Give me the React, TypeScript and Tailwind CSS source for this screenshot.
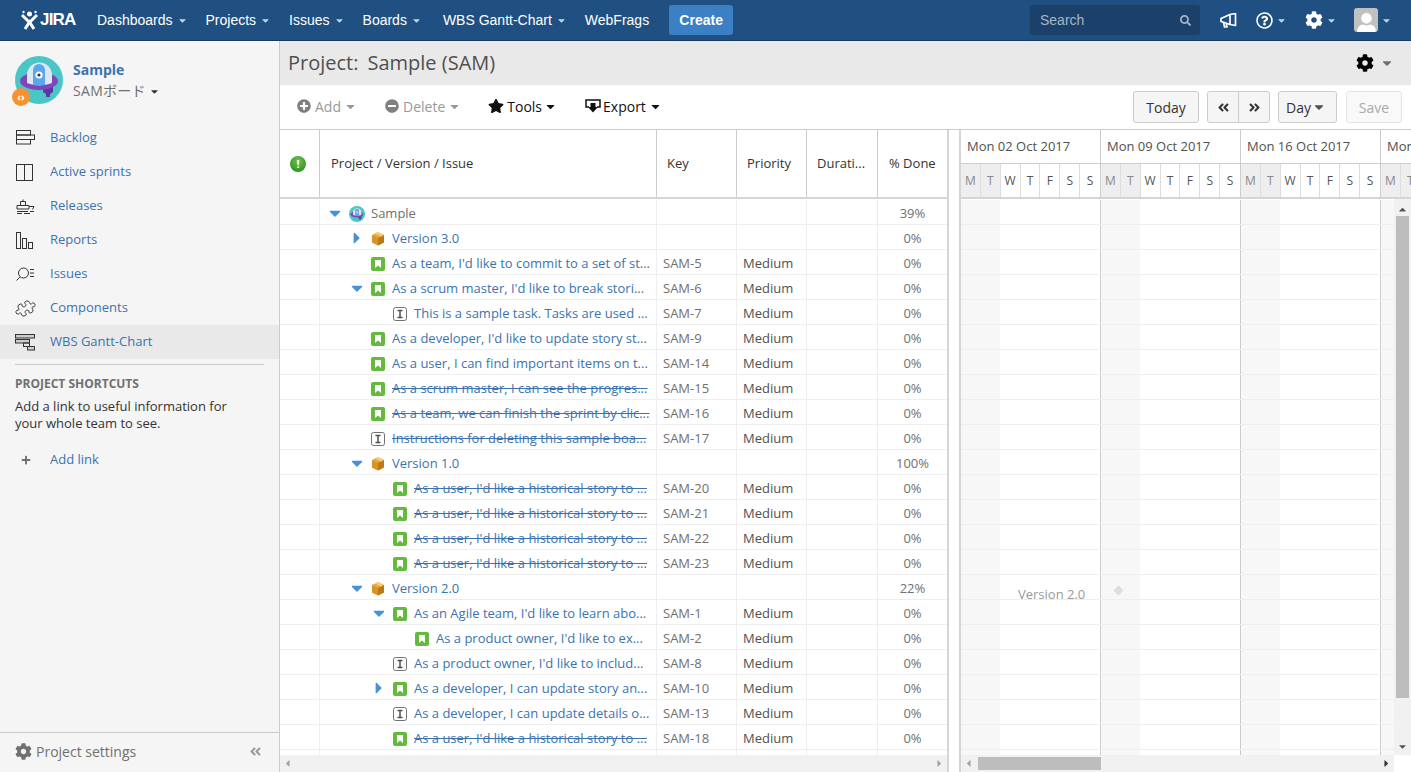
import { FaCog, FaPlus, FaPlusCircle, FaMinusCircle, FaStar, FaSearch, FaRegQuestionCircle, FaUser, FaAngleDoubleLeft, FaAngleDoubleRight, FaCaretDown, FaCaretRight, FaCaretLeft, FaCaretUp } from "react-icons/fa";
import { Puzzle } from "lucide-react";

const navItems = [
  { label: "Dashboards", caret: true, pr: "pr-[18px]" },
  { label: "Projects", caret: true, pr: "pr-[18px]" },
  { label: "Issues", caret: true, pr: "pr-[18px]" },
  { label: "Boards", caret: true, pr: "pr-[21px]" },
  { label: "WBS Gantt-Chart", caret: true, pr: "pr-[18px]" },
  { label: "WebFrags", caret: false, pr: "pr-[20px]" },
];

type Row = {
  level: number;
  type: "project" | "version" | "story" | "task" | "blank";
  title: string;
  key?: string;
  done: string;
  toggle?: "open" | "closed";
  strike?: boolean;
};

const rows: Row[] = [
  { level: 0, type: "project", title: "Sample", done: "39%", toggle: "open" },
  { level: 1, type: "version", title: "Version 3.0", done: "0%", toggle: "closed" },
  { level: 1, type: "story", title: "As a team, I'd like to commit to a set of st...", key: "SAM-5", done: "0%" },
  { level: 1, type: "story", title: "As a scrum master, I'd like to break stori...", key: "SAM-6", done: "0%", toggle: "open" },
  { level: 2, type: "task", title: "This is a sample task. Tasks are used ...", key: "SAM-7", done: "0%" },
  { level: 1, type: "story", title: "As a developer, I'd like to update story st...", key: "SAM-9", done: "0%" },
  { level: 1, type: "story", title: "As a user, I can find important items on t...", key: "SAM-14", done: "0%" },
  { level: 1, type: "story", title: "As a scrum master, I can see the progres...", key: "SAM-15", done: "0%", strike: true },
  { level: 1, type: "story", title: "As a team, we can finish the sprint by clic...", key: "SAM-16", done: "0%", strike: true },
  { level: 1, type: "task", title: "Instructions for deleting this sample boa...", key: "SAM-17", done: "0%", strike: true },
  { level: 1, type: "version", title: "Version 1.0", done: "100%", toggle: "open" },
  { level: 2, type: "story", title: "As a user, I'd like a historical story to ...", key: "SAM-20", done: "0%", strike: true },
  { level: 2, type: "story", title: "As a user, I'd like a historical story to ...", key: "SAM-21", done: "0%", strike: true },
  { level: 2, type: "story", title: "As a user, I'd like a historical story to ...", key: "SAM-22", done: "0%", strike: true },
  { level: 2, type: "story", title: "As a user, I'd like a historical story to ...", key: "SAM-23", done: "0%", strike: true },
  { level: 1, type: "version", title: "Version 2.0", done: "22%", toggle: "open" },
  { level: 2, type: "story", title: "As an Agile team, I'd like to learn abo...", key: "SAM-1", done: "0%", toggle: "open" },
  { level: 3, type: "story", title: "As a product owner, I'd like to ex...", key: "SAM-2", done: "0%" },
  { level: 2, type: "task", title: "As a product owner, I'd like to includ...", key: "SAM-8", done: "0%" },
  { level: 2, type: "story", title: "As a developer, I can update story an...", key: "SAM-10", done: "0%", toggle: "closed" },
  { level: 2, type: "task", title: "As a developer, I can update details o...", key: "SAM-13", done: "0%" },
  { level: 2, type: "story", title: "As a user, I'd like a historical story to ...", key: "SAM-18", done: "0%", strike: true },
  { level: 0, type: "blank", title: "", done: "" },
];

const weeks = ["Mon 02 Oct 2017", "Mon 09 Oct 2017", "Mon 16 Oct 2017", "Mon 23 Oct 2017"];
const days = ["M", "T", "W", "T", "F", "S", "S"];

function SideIcon({ name }: { name: string }) {
  const p = { fill: "none", stroke: "#333", strokeWidth: 1 };
  if (name === "components") {
    return <Puzzle size={19} strokeWidth={1.1} className="shrink-0 rotate-[20deg] text-[#333]" />;
  }
  return (
    <svg width="20" height="20" viewBox="0 0 20 20" className="shrink-0">
      {name === "backlog" && (
        <g {...p}>
          <rect x="1.500" y="2.500" width="14" height="4.500" />
          <rect x="1.500" y="7" width="18" height="4.500" />
          <rect x="1.500" y="11.500" width="14" height="4.500" />
        </g>
      )}
      {name === "sprints" && (
        <g {...p}>
          <rect x="1.500" y="2.500" width="16" height="16" />
          <path d="M9.500 2.500v16" />
        </g>
      )}
      {name === "releases" && (
        <g {...p}>
          <path d="M5.500 9.500v-4h5v4M8 5.500v-2M2 9.500h12v3.500H2zM14 10.500h5l-1.500 3M2 15.500h11M15 15.500h4M2 17.500h5M9 17.500h6" />
        </g>
      )}
      {name === "reports" && (
        <g {...p}>
          <rect x="1.500" y="2.500" width="4" height="16" />
          <rect x="7.500" y="8.500" width="4" height="10" />
          <rect x="13.500" y="12.500" width="4" height="6" />
        </g>
      )}
      {name === "issues" && (
        <g {...p}>
          <circle cx="8.500" cy="9" r="5" />
          <path d="M5 13L1.500 16.500M15 5.500h4M15 9h4M15 12.500h4" />
        </g>
      )}
      {name === "gantt" && (
        <g {...p}>
          <rect x="0.500" y="2.500" width="19" height="3.500" fill="#ccc" />
          <rect x="0.500" y="7.500" width="14" height="3.500" fill="#ccc" />
          <rect x="8.500" y="11" width="6" height="3.500" />
          <rect x="12.500" y="14.500" width="7" height="3.500" fill="#ccc" />
        </g>
      )}
    </svg>
  );
}

function ProjectAvatar({ size }: { size: number }) {
  return (
    <svg width={size} height={size} viewBox="0 0 48 48" className="shrink-0">
      <circle cx="24" cy="24" r="24" fill="#4bc6c6" />
      <path d="M28 30h10v6l-3 2v3h-4v-3l-3-2z" fill="#5e35a5" />
      <ellipse cx="24" cy="25" rx="19" ry="9" fill="#7e46bb" />
      <path d="M12 27V19a12.500 12.500 0 0 1 25 0v8c-8 3-17 3-25 0z" fill="#dfe6f2" />
      <path d="M18 29V14a6 6 0 0 1 12 0v15c-4 1-8 1-12 0z" fill="#5aa7ec" />
      <circle cx="24" cy="19" r="3.600" fill="#fff" />
      <circle cx="24" cy="19" r="1.600" fill="#253858" />
    </svg>
  );
}

function BoxIcon() {
  return (
    <svg width="14" height="15" viewBox="0 0 14 15" className="shrink-0">
      <path d="M7 1l6 3v7.500l-6 3-6-3V4z" fill="#e8a93a" />
      <path d="M7 7l6-3v7.500l-6 3z" fill="#b97a19" />
      <path d="M1 4l6 3v7.500l-6-3z" fill="#d79528" />
      <path d="M4 2.500l6 3 2-1-2-2-3-1.500z" fill="#f4cf7d" />
    </svg>
  );
}

function StoryIcon() {
  return (
    <span className="flex h-[14px] w-[14px] shrink-0 items-center justify-center rounded-[2px] bg-[#63ba3c]">
      <svg width="6" height="8" viewBox="0 0 6 8">
        <path d="M0 0h6v8L3 5.500 0 8z" fill="#fff" />
      </svg>
    </span>
  );
}

function TaskIcon() {
  return (
    <svg width="14" height="14" viewBox="0 0 14 14" className="shrink-0">
      <rect x="0.500" y="0.500" width="13" height="13" rx="2" fill="#fff" stroke="#707070" />
      <path d="M4.500 3.500h5M4.500 10.500h5M7 3.500v7" stroke="#505050" strokeWidth="1.500" fill="none" />
    </svg>
  );
}

function ExportIcon() {
  return (
    <svg width="16" height="14" viewBox="0 0 16 14" className="shrink-0">
      <path d="M4 8H1V1h14v7h-3" fill="none" stroke="#111" strokeWidth="1.500" />
      <path d="M5.500 4h5v4h2.500L8 13.500 3 8h2.500z" fill="#111" />
    </svg>
  );
}

function Toggle({ dir }: { dir: "open" | "closed" }) {
  return dir === "open" ? (
    <FaCaretDown className="shrink-0 text-[#4a90d9]" size={18} />
  ) : (
    <FaCaretRight className="shrink-0 text-[#4a90d9]" size={18} />
  );
}

function TreeRow({ row }: { row: Row }) {
  const pad = row.level * 22 + 29;
  return (
    <div className="flex h-[25px] shrink-0 border-b border-[#eeeeee] text-[13px]">
      <div className="w-[40px] shrink-0 border-r border-[#eeeeee]" />
      <div className="relative flex w-[337px] shrink-0 items-center whitespace-nowrap border-r border-[#eeeeee] pt-[3px]" style={{ paddingLeft: pad }}>
        {row.toggle && (
          <span className="absolute top-[4px]" style={{ left: row.level * 22 + 6 }}>
            <Toggle dir={row.toggle} />
          </span>
        )}
        {row.type === "project" && <span className="mr-[6px] flex items-center"><ProjectAvatar size={16} /></span>}
        {row.type === "version" && <span className="mr-[7px] flex items-center"><BoxIcon /></span>}
        {row.type === "story" && <span className="mr-[7px] flex items-center"><StoryIcon /></span>}
        {row.type === "task" && <span className="mr-[7px] flex items-center"><TaskIcon /></span>}
        <span className={`${row.type === "project" ? "text-[#707070]" : "text-[#3b73af]"} ${row.strike ? "line-through" : ""}`}>
          {row.title}
        </span>
      </div>
      <div className="w-[80px] shrink-0 border-r border-[#eeeeee] pl-[6px] leading-[27px] text-[#707070]">{row.key}</div>
      <div className="w-[70px] shrink-0 border-r border-[#eeeeee] pl-[6px] leading-[27px] text-[#505050]">{row.key ? "Medium" : ""}</div>
      <div className="w-[71px] shrink-0 border-r border-[#eeeeee]" />
      <div className="w-[69px] shrink-0 text-center leading-[27px] text-[#707070]">{row.done}</div>
    </div>
  );
}

export default function App() {
  return (
    <div className="flex h-[772px] w-[1411px] flex-col overflow-hidden bg-white font-['Open_Sans',sans-serif] text-[14px] text-[#333]">
      {/* top bar */}
      <header className="flex h-[41px] shrink-0 items-center border-b border-[#173a5e] bg-[#205081] pl-[21px] pr-[19px] font-['Liberation_Sans',sans-serif] text-[14px] text-white">
        <div className="flex w-[76px] shrink-0 items-center">
          <svg width="17" height="21" viewBox="0 0 17 21" className="shrink-0">
            <circle cx="8.500" cy="4" r="2.500" fill="#fff" />
            <circle cx="2.500" cy="2" r="1.200" fill="#fff" />
            <circle cx="14.500" cy="2" r="1.200" fill="#fff" />
            <path d="M1 5l7.500 7.500L16 5M4 19l4.500-7 4.500 7" fill="none" stroke="#fff" strokeWidth="3" />
          </svg>
          <span className="ml-[2px] text-[17px] font-bold tracking-[-0.8px]">JIRA</span>
        </div>
        <nav className="flex items-center">
          {navItems.map((n) => (
            <div key={n.label} className={`flex items-center ${n.pr}`}>
              <span>{n.label}</span>
              {n.caret && <FaCaretDown size={11} className="ml-[4px] text-[#c7d3e0]" />}
            </div>
          ))}
        </nav>
        <button className="h-[30px] w-[64px] rounded-[3px] bg-[#3b7fc4] text-[14px] font-bold text-white">Create</button>
        <div className="ml-auto flex items-center">
          <div className="flex h-[30px] w-[170px] items-center justify-between rounded-[3px] bg-[#1b416b] pl-[10px] pr-[9px] text-[#a5b5c6]">
            <span>Search</span>
            <FaSearch size={11} />
          </div>
          <svg width="17" height="15" viewBox="0 0 17 15" className="ml-[20px] shrink-0">
            <path d="M1 5.500l9-4v10l-9-3zM10 1.500l5.500-1v12l-5.500-1M3.500 9l1 5h2.500l-1-4.500" fill="none" stroke="#fff" strokeWidth="1.700" strokeLinejoin="round" />
          </svg>
          <FaRegQuestionCircle size={17} className="ml-[19px]" />
          <FaCaretDown size={11} className="ml-[3px] text-[#c7d3e0]" />
          <FaCog size={18} className="ml-[18px]" />
          <FaCaretDown size={11} className="ml-[3px] text-[#c7d3e0]" />
          <div className="ml-[17px] flex h-[24px] w-[24px] items-end justify-center overflow-hidden rounded-[3px] bg-[#c1c1c1]">
            <FaUser size={21} className="translate-y-[2px] text-white" />
          </div>
          <FaCaretDown size={11} className="ml-[3px] text-[#c7d3e0]" />
        </div>
      </header>

      <div className="flex min-h-0 flex-1">
        {/* sidebar */}
        <aside className="flex w-[280px] shrink-0 flex-col border-r border-[#cccccc] bg-[#f5f5f5]">
          <div className="flex h-[80px] shrink-0 items-start pl-[15px] pt-[15px]">
            <div className="relative h-[48px] w-[48px] shrink-0">
              <ProjectAvatar size={48} />
              <span className="absolute left-[-3px] top-[32px] flex h-[18px] w-[18px] items-center justify-center rounded-full bg-[#f79232] text-[10px] font-bold leading-none text-white">
                ‹›
              </span>
            </div>
            <div className="ml-[10px]">
              <div className="mt-[5px] text-[14px] font-bold leading-[18px] text-[#3b73af]">Sample</div>
              <div className="mt-[3px] flex items-center font-['Open_Sans','Noto_Sans_CJK_JP',sans-serif] text-[14px] leading-[18px] tracking-[0.3px] text-[#707070]">
                SAMボード
                <FaCaretDown size={11} className="ml-[3px] text-[#333]" />
              </div>
            </div>
          </div>
          <nav className="flex flex-col">
            {[
              ["backlog", "Backlog"],
              ["sprints", "Active sprints"],
              ["releases", "Releases"],
              ["reports", "Reports"],
              ["issues", "Issues"],
              ["components", "Components"],
              ["gantt", "WBS Gantt-Chart"],
            ].map(([icon, label]) => (
              <div key={label} className={`flex h-[34px] items-center pl-[15px] text-[13px] text-[#3b73af] ${icon === "gantt" ? "bg-[#e9e9e9]" : ""}`}>
                <span className="flex w-[20px] justify-center"><SideIcon name={icon} /></span>
                <span className="ml-[15px]">{label}</span>
              </div>
            ))}
          </nav>
          <div className="mx-[15px] mt-[5px] border-t border-[#cccccc] pt-[11px]">
            <div className="text-[12px] font-bold leading-[16px] text-[#707070]">PROJECT SHORTCUTS</div>
            <p className="mt-[6px] w-[225px] text-[13px] leading-[17px] text-[#333]">
              Add a link to useful information for your whole team to see.
            </p>
            <div className="mt-[18px] flex items-center text-[13px] text-[#3b73af]">
              <span className="w-[35px] pl-[6px] text-[#707070]">
                <FaPlus size={10} />
              </span>
              Add link
            </div>
          </div>
          <div className="mt-auto flex h-[40px] shrink-0 items-center border-t border-[#cccccc] pb-[2px] pl-[15px] pr-[17px] text-[14px] text-[#707070]">
            <FaCog size={17} />
            <span className="ml-[4px]">Project settings</span>
            <FaAngleDoubleLeft size={13} className="ml-auto text-[#999]" />
          </div>
        </aside>

        {/* main */}
        <main className="flex min-w-0 flex-1 flex-col">
          <div className="flex h-[44px] shrink-0 items-center justify-between bg-[#e9e9e9] pl-[8px] pr-[17px]">
            <h1 className="flex text-[20px] leading-[44px] text-[#505050]">
              <span>Project:</span>
              <span className="ml-[9px]">Sample (SAM)</span>
            </h1>
            <div className="flex items-center">
              <FaCog size={18} className="text-black" />
              <FaCaretDown size={14} className="ml-[6px] text-[#707070]" />
            </div>
          </div>
          <div className="flex h-[45px] shrink-0 items-center border-b border-[#cccccc] pl-[17px] pr-[9px] text-[14px]">
            <div className="flex items-center pb-[2px] text-[#999]">
              <FaPlusCircle size={14} className="text-[#808080]" />
              <span className="ml-[4px]">Add</span>
              <FaCaretDown size={13} className="ml-[3px]" />
            </div>
            <div className="ml-[28px] flex items-center pb-[2px] text-[#999]">
              <FaMinusCircle size={14} className="text-[#808080]" />
              <span className="ml-[4px]">Delete</span>
              <FaCaretDown size={13} className="ml-[3px]" />
            </div>
            <div className="ml-[27px] flex items-center pb-[2px] text-[#111]">
              <FaStar size={16} />
              <span className="ml-[3px]">Tools</span>
              <FaCaretDown size={13} className="ml-[2px]" />
            </div>
            <div className="ml-[28px] flex items-center pb-[2px] text-[#111]">
              <ExportIcon />
              <span className="ml-[2px]">Export</span>
              <FaCaretDown size={13} className="ml-[3px]" />
            </div>
            <div className="ml-auto flex items-center">
              <button className="h-[32px] w-[66px] rounded-[3px] border border-[#cccccc] bg-[#f5f5f5] text-[#333]">Today</button>
              <div className="ml-[8px] flex h-[32px] w-[63px] rounded-[3px] border border-[#cccccc] bg-[#f5f5f5]">
                <span className="flex flex-1 items-center justify-center border-r border-[#cccccc]">
                  <FaAngleDoubleLeft size={13} />
                </span>
                <span className="flex flex-1 items-center justify-center">
                  <FaAngleDoubleRight size={13} />
                </span>
              </div>
              <button className="ml-[8px] flex h-[32px] w-[59px] items-center rounded-[3px] border border-[#cccccc] bg-[#f5f5f5] pl-[7px] text-[#333]">
                Day
                <FaCaretDown size={14} className="ml-[1px] text-[#505050]" />
              </button>
              <button className="ml-[9px] h-[32px] w-[56px] rounded-[3px] border border-[#e5e5e5] bg-[#f9f9f9] text-[#aaa]">Save</button>
            </div>
          </div>

          <div className="flex min-h-0 flex-1">
            {/* tree table */}
            <div className="flex w-[667px] shrink-0 flex-col">
              <div className="flex h-[69px] shrink-0 border-b-2 border-[#d5d5d5] text-[13px] text-[#333]">
                <div className="flex w-[40px] shrink-0 items-center justify-center border-r border-[#cccccc] pr-[3px]">
                  <span className="flex h-[16px] w-[16px] items-center justify-center rounded-full bg-[radial-gradient(circle_at_50%_30%,#6cc04a,#1d8a1d)] text-[11px] font-bold leading-none text-white">!</span>
                </div>
                <div className="flex w-[337px] shrink-0 items-center border-r border-[#cccccc] pl-[11px]">Project / Version / Issue</div>
                <div className="flex w-[80px] shrink-0 items-center border-r border-[#cccccc] pl-[10px]">Key</div>
                <div className="flex w-[70px] shrink-0 items-center border-r border-[#cccccc] pl-[10px]">Priority</div>
                <div className="flex w-[71px] shrink-0 items-center border-r border-[#cccccc] pl-[10px]">Durati...</div>
                <div className="flex w-[69px] shrink-0 items-center pl-[11px]">% Done</div>
              </div>
              <div className="min-h-0 flex-1 overflow-hidden pt-px">
                {rows.map((r, i) => (
                  <TreeRow key={i} row={r} />
                ))}
              </div>
              <div className="flex h-[17px] shrink-0 items-center justify-between bg-[#f1f1f1] px-[2px] text-[#a3a3a3]">
                <FaCaretLeft size={11} />
                <FaCaretRight size={11} />
              </div>
            </div>

            {/* splitter */}
            <div className="w-[14px] shrink-0 border-l-2 border-r-2 border-[#d5d5d5] bg-white" />

            {/* chart */}
            <div className="relative flex min-w-0 flex-1 flex-col overflow-hidden">
              <div className="flex h-[69px] shrink-0 overflow-hidden border-b-2 border-[#d5d5d5]">
                {weeks.map((w) => (
                  <div key={w} className="w-[140px] shrink-0 border-r border-[#cccccc]">
                    <div className="flex h-[33px] items-center whitespace-nowrap pl-[6px] text-[13px] text-[#505050]">{w}</div>
                    <div className="flex h-[34px] border-t border-[#cccccc]">
                      {days.map((d, i) => (
                        <div
                          key={i}
                          className={`flex w-[20px] items-center justify-center border-r border-[#dddddd] text-[12px] last:border-r-0 ${i < 2 ? "bg-[#eeeeee] text-[#888]" : "text-[#555]"}`}
                        >
                          {d}
                        </div>
                      ))}
                    </div>
                  </div>
                ))}
              </div>
              <div className="flex min-h-0 flex-1">
                <div className="min-w-0 flex-1 overflow-hidden pt-px">
                  {rows.map((r, i) => (
                    <div key={i} className="flex h-[25px] border-b border-[#eeeeee]">
                      {weeks.map((w) => (
                        <div key={w} className="flex w-[140px] shrink-0 border-r border-[#cccccc]">
                          <div className="w-[39px] bg-[#f7f7f7]" />
                        </div>
                      ))}
                    </div>
                  ))}
                </div>
                <div className="flex w-[17px] shrink-0 flex-col items-center bg-[#f1f1f1]">
                  <FaCaretUp size={11} className="mt-[5px] text-[#555]" />
                  <div className="mt-[1px] h-[482px] w-[13px] bg-[#bdbdbd]" />
                  <FaCaretDown size={11} className="mb-[3px] mt-auto text-[#555]" />
                </div>
              </div>
              <div className="flex h-[17px] shrink-0 bg-white">
                <div className="flex flex-1 items-center bg-[#f1f1f1] pl-[2px] pr-[2px] text-[#a3a3a3]">
                  <FaCaretLeft size={11} />
                  <div className="ml-[4px] h-[13px] w-[123px] bg-[#bdbdbd]" />
                  <FaCaretRight size={11} className="ml-auto text-[#333]" />
                </div>
                <div className="w-[17px] shrink-0" />
              </div>
              <span className="absolute left-[57px] top-[455px] text-[13px] text-[#999]">Version 2.0</span>
              <span className="absolute left-[154px] top-[457px] h-[7px] w-[7px] rotate-45 bg-[#dddddd]" />
            </div>
          </div>
        </main>
      </div>
    </div>
  );
}
